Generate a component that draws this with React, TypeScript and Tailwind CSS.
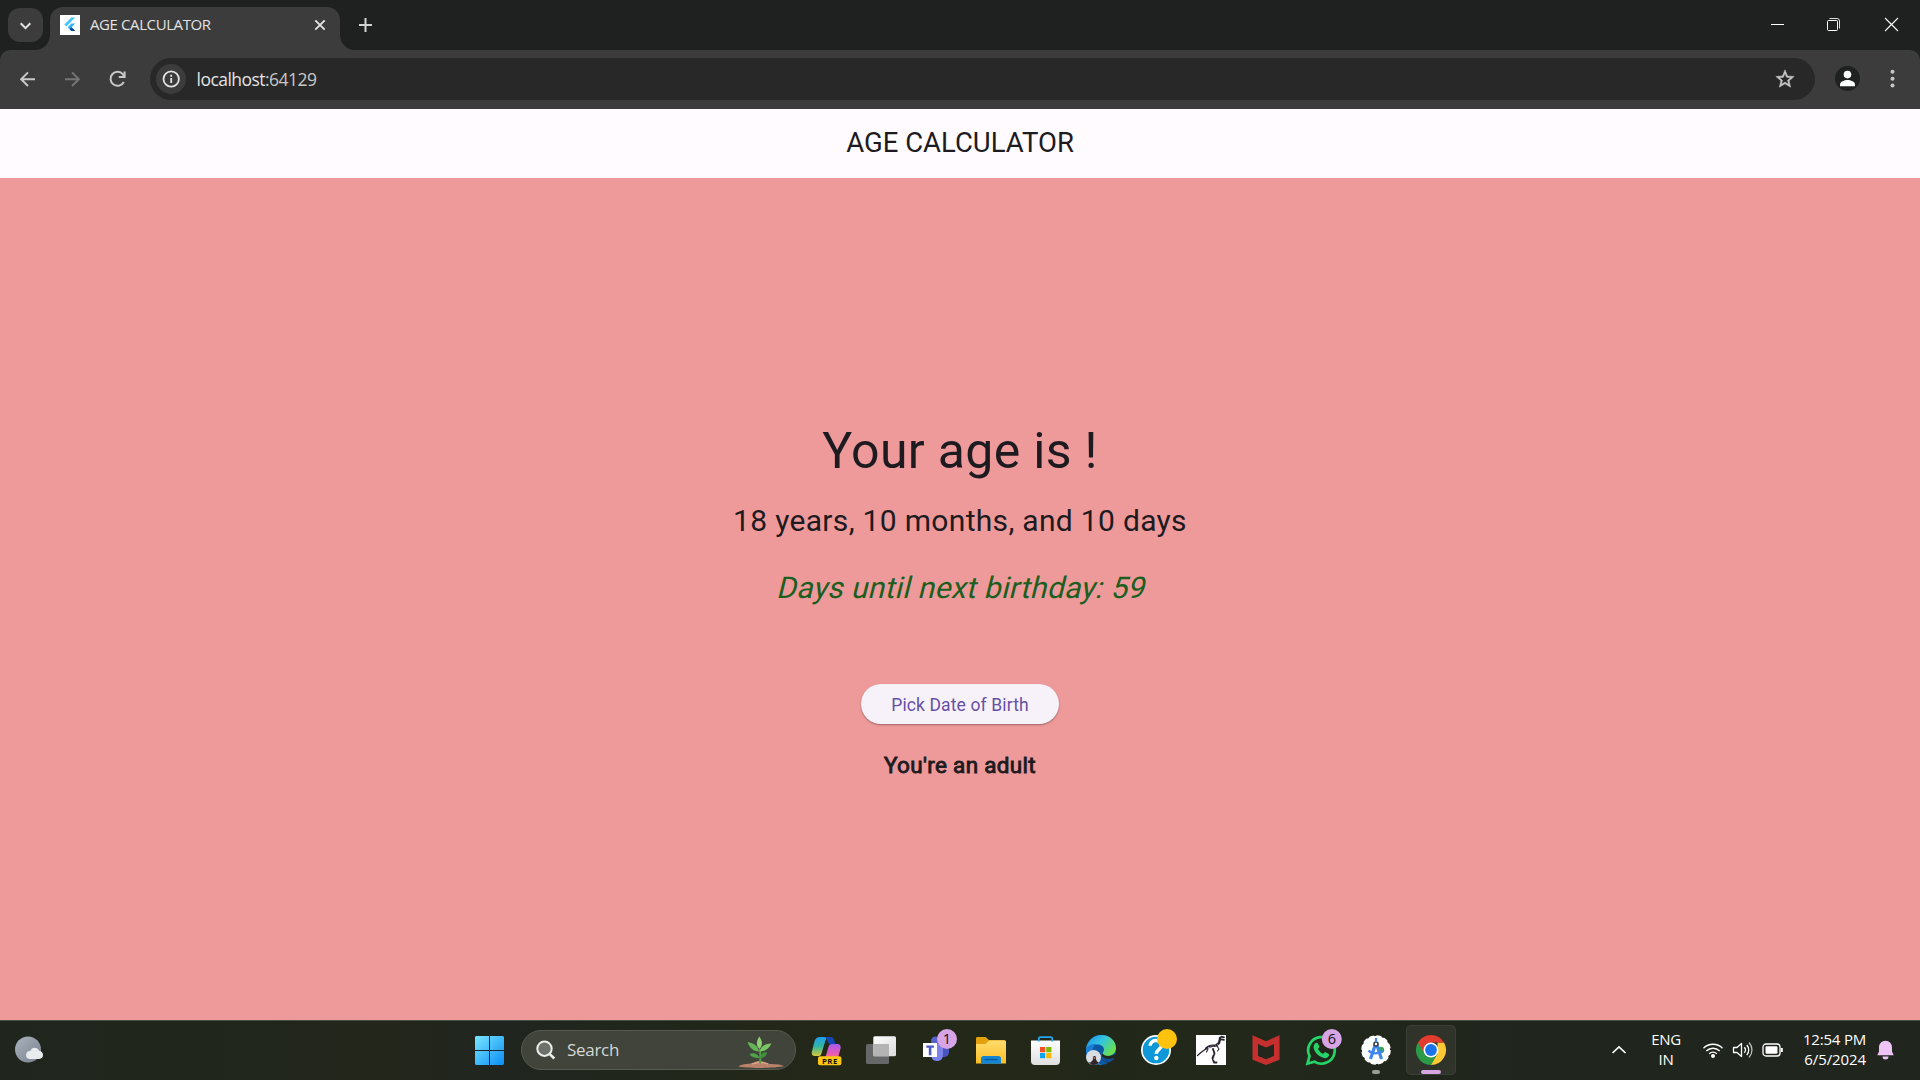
import React from "react";

const ui = "font-['Open_Sans','Noto_Sans',sans-serif]";
const roboto = "font-['Roboto',sans-serif]";

function FlutterMark() {
  return (
    <svg className="h-5 w-5 shrink-0" viewBox="0 0 20 20">
      <rect width="20" height="20" fill="#fff" />
      <path d="M11.3 2.6h3.9L6.4 11.4 4.4 9.5z" fill="#47c5fb" />
      <path d="M11.4 8.6h3.8l-3.6 3.6 3.6 3.7h-3.8L7.7 12.3z" fill="#33b3f2" />
      <path d="M9.6 14.2l1.9-1.9 3.7 3.7h-3.8z" fill="#02478f" />
    </svg>
  );
}

function TabStrip() {
  return (
    <div className="flex h-[50px] items-start bg-[#1f2120] text-[#e3e3e3]">
      <div className="mt-2 ml-2 flex h-[34px] w-[35px] items-center justify-center rounded-[12px] bg-[#3c3c3c]">
        <svg className="h-[17px] w-[17px]" viewBox="0 0 17 17" fill="none" stroke="#e3e3e3" strokeWidth="2">
          <path d="M3.7 6.3l4.8 4.8 4.8-4.8" />
        </svg>
      </div>
      <svg className="-ml-2 mt-[34px] h-4 w-[15px]" viewBox="0 0 15 16">
        <path d="M15 0v16H0C8 16 15 10 15 0z" fill="#3c3c3c" />
      </svg>
      <div className="mt-[7px] flex h-[43px] w-[290px] items-center rounded-t-[13px] bg-[#3c3c3c] pb-[7px] pl-[10px]">
        <FlutterMark />
        <span className={`${ui} ml-[10px] w-[224px] pb-px text-[15px] tracking-[-0.4px] whitespace-nowrap`}>AGE CALCULATOR</span>
        <svg className="h-[12px] w-[12px] shrink-0" viewBox="0 0 12 12" stroke="#e3e3e3" strokeWidth="1.9">
          <path d="M1.3 1.3l9.4 9.4M10.7 1.3l-9.4 9.4" />
        </svg>
      </div>
      <svg className="mt-[34px] h-4 w-[15px]" viewBox="0 0 15 16">
        <path d="M0 0v16h15C7 16 0 10 0 0z" fill="#3c3c3c" />
      </svg>
      <svg className="ml-1 mt-[18px] h-[14px] w-[14px]" viewBox="0 0 14 14" stroke="#d3d3d3" strokeWidth="2">
        <path d="M6.5 0v14M0 7h13" />
      </svg>
      <div className="mt-[17px] mr-[21px] ml-auto flex items-center">
        <svg className="h-[15px] w-[15px]" viewBox="0 0 15 15" stroke="#fff" strokeWidth="1">
          <path d="M1 7.5h13" />
        </svg>
        <svg className="ml-[41px] h-[15px] w-[15px]" viewBox="0 0 15 15" fill="none">
          <rect x="1.500" y="3.500" width="10" height="10" rx="1" stroke="#fff" />
          <path d="M3.500 1.500h7.500a2.500 2.500 0 0 1 2.500 2.500v7.500" stroke="#dedede" />
        </svg>
        <svg className="ml-[43px] h-[15px] w-[15px]" viewBox="0 0 15 15" stroke="#fff" strokeWidth="1.100">
          <path d="M1 1l13 13M14 1L1 14" />
        </svg>
      </div>
    </div>
  );
}

function Toolbar() {
  return (
    <div className="bg-[#1f2120]">
      <div className="flex h-[59px] items-center rounded-t-[10px] bg-[#3c3c3c] pb-px">
        <svg className="ml-[17px] h-[21px] w-[21px]" viewBox="0 0 21 21" fill="none" stroke="#c9c9c9" strokeWidth="2">
          <path d="M18 10.2H4.400M11 3.400l-6.800 6.800 6.800 6.800" />
        </svg>
        <svg className="ml-[24px] h-[21px] w-[21px]" viewBox="0 0 21 21" fill="none" stroke="#757575" strokeWidth="2">
          <path d="M3 10.200h13.600M10 3.400l6.800 6.800-6.800 6.800" />
        </svg>
        <svg className="ml-[24px] h-[21px] w-[21px]" viewBox="0 0 21 21" fill="none" stroke="#c9c9c9" strokeWidth="2">
          <path d="M16.800 13a7 7 0 1 1-.8-7.600l1.300 1.600" />
          <path d="M17.600 2.400v5.700h-5.800" />
        </svg>
        <div className="ml-[22px] flex h-[42px] w-[1665px] items-center rounded-full bg-[#282828]">
          <div className="ml-[6px] flex h-[30px] w-[30px] items-center justify-center rounded-full bg-[#3c3c3c]">
            <svg className="h-[18px] w-[18px]" viewBox="0 0 18 18" fill="none" stroke="#e3e3e3" strokeWidth="1.800">
              <circle cx="9.200" cy="9" r="7.700" />
              <path d="M9.200 8v5M9.200 4.700v2" />
            </svg>
          </div>
          <span className={`${ui} ml-[10.5px] text-[17.5px] tracking-[-0.53px] whitespace-nowrap text-[#e3e3e3]`}>
            localhost<span className="text-[#c7c7c7]">:64129</span>
          </span>
          <svg className="mr-[19px] ml-auto h-[22px] w-[22px]" viewBox="0 0 24 24" fill="#c7c7c7">
            <path d="M22 9.24l-7.19-.62L12 2 9.19 8.63 2 9.24l5.46 4.73L5.82 21 12 17.27 18.18 21l-1.63-7.03L22 9.24zM12 15.4l-3.76 2.27 1-4.28-3.32-2.88 4.38-.38L12 6.1l1.71 4.04 4.38.38-3.32 2.88 1 4.28L12 15.4z" stroke="#c7c7c7" strokeWidth=".5" />
          </svg>
        </div>
        <svg className="-mt-px ml-[20px] h-[25px] w-[25px]" viewBox="0 0 25 25">
          <circle cx="12.500" cy="12.500" r="12.500" fill="#1f2120" />
          <circle cx="12.500" cy="8.600" r="3.800" fill="#fff" />
          <path d="M5 20.200v-1.700c0-3 4.500-4.600 7.500-4.600s7.500 1.600 7.500 4.600v1.700z" fill="#fff" />
        </svg>
        <svg className="ml-[30px] h-[20px] w-[5px]" viewBox="0 0 5 20" fill="#c7c7c7">
          <circle cx="2.500" cy="2.800" r="2" />
          <circle cx="2.500" cy="9.800" r="2" />
          <circle cx="2.500" cy="16.600" r="2" />
        </svg>
      </div>
    </div>
  );
}

function AgePage() {
  return (
    <main className={`${roboto} flex h-[911px] flex-col text-[#1d1b20]`}>
      <header className="flex h-[69px] items-center justify-center bg-[#fffbff] pb-[2px] text-[27.5px]">
        <h1>AGE CALCULATOR</h1>
      </header>
      <section className="flex flex-1 flex-col items-center bg-[#ef9a9a] pt-[237px]">
        <p className="text-[50px] leading-[72px] tracking-[0.3125px]">Your age is !</p>
        <p className="mt-[13px] text-[30px] leading-[42px] tracking-[0.3125px]">18 years, 10 months, and 10 days</p>
        <p className="mt-[25px] origin-[50%_31px] -skew-x-[14deg] text-[30px] leading-[42px] tracking-[0.3125px] text-[#1b5e20]">
          Days until next birthday: 59
        </p>
        <button className="mt-[75px] h-[40px] w-[198px] rounded-full bg-[#f7f2fa] pt-[2px] text-[17.5px] font-normal tracking-[0.125px] text-[#6750a4] shadow-[0_1px_2px_rgba(0,0,0,0.35)]">
          Pick Date of Birth
        </button>
        <p className="mt-[22.5px] text-[22.5px] leading-[36px] font-normal tracking-[0.3125px] [-webkit-text-stroke:0.9px_#1d1b20]">
          You're an adult
        </p>
      </section>
    </main>
  );
}

function Slot({ children, active }: { children: React.ReactNode; active?: boolean }) {
  return (
    <svg className={active ? "h-[50px] w-[50px] rounded-[5px] bg-[#2f332a] outline-1 -outline-offset-1 outline-[#3a3e34]" : "h-[50px] w-[50px]"} viewBox="0 0 50 50">
      {children}
    </svg>
  );
}

function Badge({ x, n }: { x: number; n: string }) {
  return (
    <>
      <circle cx={x} cy="14" r="10" fill="#d7a5e6" />
      <text x={x} y="19.200" textAnchor="middle" fontSize="14.500" fill="#111" fontFamily="Open Sans, sans-serif">
        {n}
      </text>
    </>
  );
}

function PinnedApps() {
  return (
    <div className="ml-[5px] flex gap-[5px]">
      <Slot>
        <defs>
          <linearGradient id="cpA" x1="0" y1="0" x2="0" y2="1">
            <stop offset="0" stopColor="#1d9fee" />
            <stop offset=".5" stopColor="#32b6a0" />
            <stop offset="1" stopColor="#d9c93a" />
          </linearGradient>
          <linearGradient id="cpB" x1="0" y1="0" x2="0" y2="1">
            <stop offset="0" stopColor="#a45cf0" />
            <stop offset=".5" stopColor="#e558b8" />
            <stop offset="1" stopColor="#fb8a55" />
          </linearGradient>
        </defs>
        <path d="M19 12h8c-1.500 1-2.500 3-3 5l-3.700 12c-.5 1.600-1.300 2-2.800 2H14c-2.600 0-3.800-1.500-3.200-4l2.500-10C14.200 13.400 16 12 19 12z" fill="url(#cpA)" />
        <path d="M23 12h7c1.600 0 2.500 1.200 3 2.800l1.300 4.200h-4.800c-1.500 0-2.500-1-3-3-.4-2-1.300-3.600-3.500-4z" fill="#1347b8" />
        <path d="M31 19h5c3 0 4.200 2 3.500 4.700l-2.500 9c-.8 3-2.400 4.300-5 4.300H23l4.500-15c.6-2 1.500-3 3.500-3z" fill="url(#cpB)" />
        <rect x="17" y="31.200" width="23.400" height="9" rx="2" fill="#fcc612" />
        <text x="28.900" y="38.500" textAnchor="middle" fontSize="7.800" fontWeight="bold" letterSpacing=".5" fill="#111" fontFamily="Open Sans, sans-serif">PRE</text>
      </Slot>
      <Slot>
        <defs>
          <linearGradient id="tv" x1="0" y1="0" x2="1" y2="1">
            <stop offset="0" stopColor="#fff" />
            <stop offset="1" stopColor="#dadada" />
          </linearGradient>
        </defs>
        <rect x="10" y="19" width="23" height="20" rx="1.500" fill="#666767" />
        <rect x="17.300" y="11.300" width="22.700" height="20" rx="1.500" fill="url(#tv)" />
        <path d="M17.300 19H33v12.300H18.800a1.500 1.500 0 0 1-1.500-1.500z" fill="#b3b4b3" />
      </Slot>
      <Slot>
        <circle cx="24.500" cy="16" r="4.500" fill="#5a62c9" />
        <path d="M28 19h10v9a5.500 5.500 0 0 1-6 4h-4z" fill="#4b53bc" />
        <path d="M21 19h11v10.500c0 4.500-2.500 6.500-6 6.500-3 0-5-1.500-5.500-4z" fill="#7b83eb" />
        <rect x="12" y="18" width="14" height="14" fill="#fff" />
        <path d="M15.300 20.500h7.600v2.300h-2.500v7.400h-2.600v-7.400h-2.500z" fill="#5059c9" />
        <Badge x={36} n="1" />
      </Slot>
      <Slot>
        <defs>
          <linearGradient id="fd" x1="0" y1="0" x2="0" y2="1">
            <stop offset="0" stopColor="#ffdc6e" />
            <stop offset="1" stopColor="#fdbd22" />
          </linearGradient>
        </defs>
        <path d="M10 13.500c0-1 .6-1.500 1.500-1.500h8l3.500 3h15c1.200 0 2 .8 2 2v6H10z" fill="#e3a10e" />
        <path d="M10 19h9.500l3.500-3.500h15.500a1.500 1.500 0 0 1 1.500 1.500v21.600H10z" fill="url(#fd)" />
        <path d="M15 38.700v-5.200c0-1.500 1-2.500 2.500-2.500h15c1.500 0 2.500 1 2.500 2.500v5.200z" fill="#1485d2" />
        <path d="M18.500 34.500h13" stroke="#0a5698" strokeWidth="1.300" />
      </Slot>
      <Slot>
        <defs>
          <linearGradient id="ms" x1="0" y1="0" x2="0" y2="1">
            <stop offset="0" stopColor="#fff" />
            <stop offset="1" stopColor="#dedede" />
          </linearGradient>
        </defs>
        <path d="M10 15.500h29v20.500a4 4 0 0 1-4 4H14a4 4 0 0 1-4-4z" fill="url(#ms)" />
        <path d="M17.800 16.500v-3c0-.9.500-1.400 1.400-1.400h10.600c.9 0 1.400.5 1.400 1.400v3" fill="none" stroke="#25a5ea" strokeWidth="1.800" />
        <path d="M19 22h5.200v5.200H19z" fill="#f05024" />
        <path d="M25.200 22h5.200v5.200h-5.200z" fill="#7fba00" />
        <path d="M19 28h5.200v5.200H19z" fill="#08a4ef" />
        <path d="M25.200 28h5.200v5.200h-5.200z" fill="#ffb902" />
      </Slot>
      <Slot>
        <defs>
          <linearGradient id="ea" x1="0" y1="0" x2="1" y2=".6">
            <stop offset="0" stopColor="#1c8ee0" />
            <stop offset=".5" stopColor="#33c3e3" />
            <stop offset="1" stopColor="#6ae04f" />
          </linearGradient>
          <clipPath id="avatar"><circle cx="17.500" cy="32.500" r="7.500" /></clipPath>
        </defs>
        <circle cx="25" cy="25" r="15" fill="#0c59a4" />
        <path d="M10 24c1-8 7.500-14 15.500-14C34 10 40 16 40 23c0 5-4 8-8.500 8-3 0-5-1-5-2.500 0-1 1.500-1.700 1.500-4 0-3-3-5-6.500-5C16 19.500 11 21 10 24z" fill="url(#ea)" />
        <path d="M10 24c1.500-3.500 6-5.500 10.500-5-3 1.800-4.500 5-4 9 .5 6 5 10 9.500 11.900C16 40.500 9 33 10 24z" fill="#1a7fd4" />
        <path d="M26.500 28c.5 2 3 3.200 6.500 3 2.500-.1 5-1 8-3v8l-3 4-9-3c-3-1.500-4-5-2.500-9z" fill="#22261b" />
        <path d="M38.500 32.500c-4 2-11 2.500-14-3.500-1 5 4 9 9 8.300 2-.6 4-2.500 5-4.800z" fill="#124f96" />
        <circle cx="17.500" cy="32.500" r="7.500" fill="#d8dde4" />
        <g clipPath="url(#avatar)">
          <path d="M10 37h15v4H10z" fill="#77777b" />
          <path d="M14 41c0-4 2-4.500 3-6.500-.3-2.200.2-3.500 1.500-3.500s1.800 1.300 1.500 3.500c.8 2 3 2.500 3 6.500z" fill="#32262b" />
          <circle cx="18.500" cy="33" r="1" fill="#b97f66" />
        </g>
      </Slot>
      <Slot>
        <circle cx="25" cy="25" r="15" fill="#fff" />
        <circle cx="25" cy="25" r="13.300" fill="#0e98d8" />
        <path d="M19.200 20.800c0-3.200 2.400-5.300 5.700-5.300 3.400 0 5.700 2 5.700 4.800 0 4-5.300 4.200-5.300 8.400" fill="none" stroke="#fff" strokeWidth="3.500" />
        <circle cx="25.300" cy="33" r="2.200" fill="#fff" />
        <circle cx="36" cy="14" r="10" fill="#ffc20e" />
      </Slot>
      <Slot>
        <rect x="10" y="10" width="30" height="30" fill="#fff" />
        <g fill="none" stroke="#2a2530" strokeLinecap="round" strokeLinejoin="round">
          <path d="M11.500 30.500l4-3.500 5-3.500" strokeWidth="1.300" />
          <path d="M20 23.500c3-3 7-3 10-3l3-2.500 1-4" strokeWidth="2.400" />
          <path d="M33.500 13l2-1.300 2.500.6M35 14.300l3 .5" strokeWidth="1.700" />
          <path d="M27 24l1.500 4.500-2 4.500 1.500 4.500h2.500" strokeWidth="1.900" />
          <path d="M22 24l-1.500 3M31 21l2 3-1.500 2" strokeWidth="1.100" />
        </g>
        <path d="M22 22.500l2 .5M26 20.500l1 1M31 19l.8.500M27.500 29l.7.500M27 34l.8.500" stroke="#c9bccf" strokeWidth="1" />
        <path d="M24 21.500l1 .6M29 20.500l1 .4M27.500 32l.6.600" stroke="#8a4fa0" strokeWidth=".9" />
      </Slot>
      <Slot>
        <path d="M11.500 10.300L25 16.200l13.500-5.900v24.500L25 40l-13.500-5.200z" fill="#c5302f" />
        <path d="M17 19l8 3.600 8-3.600v11.900l-8 3.300-8-3.300z" fill="#22261d" />
      </Slot>
      <Slot>
        <path d="M11.500 38.500l2-7.300A13.300 13.300 0 1 1 18.500 36.700z" fill="none" stroke="#25d366" strokeWidth="2.700" />
        <path d="M19.200 18.300c1-1 2.200-.8 2.700.2l1.300 2.800c.3.800-.2 1.500-1.200 2.600 1.200 2.300 2.900 4 5.200 5 1-1.300 1.500-2 2.400-1.600l2.800 1.400c.8.400.8 1 .5 2-.8 2-3 2.800-5 2.300-5-1.300-9-5-10.200-9.700-.4-2 .3-3.900 1.500-5z" fill="#25d366" />
        <Badge x={35.8} n="6" />
      </Slot>
      <Slot>
        <circle cx="25" cy="25" r="14" fill="#fff" stroke="#fff" strokeWidth="1.500" strokeDasharray="5 2.330" />
        <circle cx="30" cy="25" r="3.200" fill="#34a853" />
        <g fill="none" stroke="#3f86ee" strokeWidth="3.200">
          <path d="M24.500 19l-5 15M25.500 19l5 15" />
          <path d="M17.500 25.500c3.500 3.800 10 3.800 14 0" strokeWidth="2.300" />
        </g>
        <circle cx="25" cy="19" r="2" fill="#fff" stroke="#3c4043" strokeWidth="1.600" />
        <path d="M25 13v4" stroke="#3f86ee" strokeWidth="2.200" />
        <rect x="21" y="45" width="8" height="4" rx="2" fill="#9a9c98" />
      </Slot>
      <Slot active>
        <path d="M12 17.500A15 15 0 0 0 25 40l6.500-11.300L25 25z" fill="#2b9b48" />
        <path d="M38 17.500A15 15 0 0 1 25 40l6.500-11.300V17.500z" fill="#fcc934" />
        <path d="M25 17.500h13A15 15 0 0 0 12 17.500l6.500 11z" fill="#e33b2e" />
        <circle cx="25" cy="25" r="7.500" fill="#fff" />
        <circle cx="25" cy="25" r="5.900" fill="#1a73e8" />
        <rect x="15" y="45" width="20" height="4" rx="2" fill="#d7a5e6" />
      </Slot>
    </div>
  );
}

function SearchBox() {
  return (
    <div className="ml-[17px] flex h-[40px] w-[275px] items-center overflow-hidden rounded-full border border-[#565a50] bg-[#40443b]">
      <svg className="ml-[14px] h-[20px] w-[20px]" viewBox="0 0 20 20" fill="none" stroke="#eceeec" strokeWidth="2">
        <circle cx="8.500" cy="8.700" r="7.200" fill="#6c716b" />
        <path d="M13.500 13.800l4.800 4.700" strokeWidth="2.500" />
      </svg>
      <span className={`${ui} ml-[11px] text-[17px] tracking-[-0.3px] text-[#d5d7d2]`}>Search</span>
      <svg className="mr-[10px] ml-auto h-[38px] w-[48px]" viewBox="0 0 48 38">
        <path d="M1 35.500c5-3.500 12-2 16-4 5-2.500 9-1.500 13 .5s9 0 17 3c-8 2.500-38 2.500-46 .5z" fill="#b9826a" />
        <path d="M15 33c5-2 11-2 16 0" stroke="#e0ab8d" strokeWidth="1.200" fill="none" />
        <path d="M23 32c1-6 0-9 0-14" stroke="#4f9c45" strokeWidth="2" fill="none" />
        <path d="M22.500 18c-4-4-3-8-.2-12.500C25.500 10 26 14 22.500 18z" fill="#8ccf6e" />
        <path d="M22 20.500c-6 0-9.500-4-11.500-9.500C17 12 21 15 22 20.500z" fill="#65b556" />
        <path d="M23 20.500c.5-5 4-7.800 11.500-8C31.500 18 28 20.500 23 20.500z" fill="#7cc566" />
        <path d="M22.500 27c-5 .3-8-1-10-3.500 4-2.500 8-1 10 3.500z" fill="#4fa349" />
        <path d="M23 27c1-4.500 3.500-6.500 7-5.500-.3 3.500-3 5.700-7 5.500z" fill="#3f913f" />
      </svg>
    </div>
  );
}

function Tray() {
  return (
    <div className={`${ui} ml-auto flex h-full items-center pr-[26px] text-[15px] leading-[20px] whitespace-nowrap text-white`}>
      <svg className="h-[10px] w-[16px]" viewBox="0 0 16 10" fill="none" stroke="#fff" strokeWidth="1.700">
        <path d="M1.500 8L8 2l6.500 6" />
      </svg>
      <div className="ml-[9px] w-[60px] pb-[2px] text-center tracking-[-0.3px]">
        <div>ENG</div>
        <div>IN</div>
      </div>
      <svg className="ml-[6px] h-[18px] w-[22px]" viewBox="0 0 22 18" fill="none" stroke="#fff" strokeWidth="1.400">
        <path d="M1.500 7.200a13.400 13.400 0 0 1 19 0M4.300 10a9.500 9.500 0 0 1 13.400 0M7.200 12.700a5.400 5.400 0 0 1 7.600 0" />
        <circle cx="11" cy="15" r="2" fill="#fff" stroke="none" />
      </svg>
      <svg className="ml-[8px] h-[18px] w-[22px]" viewBox="0 0 22 18" fill="none" stroke="#fff" strokeWidth="1.300">
        <path d="M1.500 6.500H5l4.500-4v13l-4.500-4H1.500z" strokeLinejoin="round" />
        <path d="M12.300 6.300a4 4 0 0 1 0 5.400M14.800 4a7.500 7.500 0 0 1 0 10" />
        <path d="M17 1.500a11 11 0 0 1 0 15" stroke="#bbb" />
      </svg>
      <svg className="ml-[8px] h-[14px] w-[22px]" viewBox="0 0 22 14" fill="none" stroke="#fff" strokeWidth="1.300">
        <rect x="1" y="1" width="17" height="12" rx="3" />
        <rect x="3.500" y="3.300" width="12" height="7.400" rx="1.200" fill="#fff" stroke="none" />
        <path d="M19.800 5v4" strokeWidth="2" />
      </svg>
      <div className="ml-[16px] w-[66px] pb-[2px] text-right">
        <div className="tracking-[-0.2px]">12:54 PM</div>
        <div className="tracking-[-0.1px]">6/5/2024</div>
      </div>
      <svg className="ml-[11px] h-[20px] w-[17px]" viewBox="0 0 17 20" fill="#efc3f5">
        <path d="M8.500.8c4 0 6.500 3 6.500 6.500v4.200l1.700 3.700H.3L2 11.500V7.300C2 3.800 4.500.8 8.500.8z" />
        <path d="M5.500 16.500h6a3 3 0 0 1-6 0z" />
      </svg>
    </div>
  );
}

function Taskbar() {
  return (
    <footer className="flex h-[60px] items-center border-t border-[#484d44] bg-[linear-gradient(90deg,#20261e_0%,#22261b_20%,#20251f_26%,#232818_45%,#22281a_65%,#20251e_80%,#20251e_100%)] pb-px">
      <svg className="ml-[14px] h-[30px] w-[30px]" viewBox="0 0 30 30">
        <defs>
          <linearGradient id="moon" x1="0" y1="0" x2="1" y2="1">
            <stop offset="0" stopColor="#a9b2bd" />
            <stop offset="1" stopColor="#78818d" />
          </linearGradient>
        </defs>
        <circle cx="14" cy="14.500" r="13" fill="url(#moon)" />
        <path d="M16 24a4 4 0 0 1 .3-8c1.200-4.300 7.200-4.500 8.800-.3 5 .4 5.500 8 0 8.300z" fill="#e9ecef" />
      </svg>
      <svg className="ml-[431px] h-[29px] w-[29px]" viewBox="0 0 29 29">
        <defs>
          <linearGradient id="win" gradientUnits="userSpaceOnUse" x1="0" y1="0" x2="29" y2="29">
            <stop offset="0" stopColor="#78e6ff" />
            <stop offset="1" stopColor="#0a8df5" />
          </linearGradient>
        </defs>
        <path d="M1 0h13v14H0V1zM15 0h13l1 1v13H15zM0 15h14v14H1l-1-1zM15 15h14v13l-1 1H15z" fill="url(#win)" />
      </svg>
      <SearchBox />
      <PinnedApps />
      <Tray />
    </footer>
  );
}

export default function App() {
  return (
    <div className="flex h-[1080px] w-[1920px] flex-col overflow-hidden">
      <TabStrip />
      <Toolbar />
      <AgePage />
      <Taskbar />
    </div>
  );
}
